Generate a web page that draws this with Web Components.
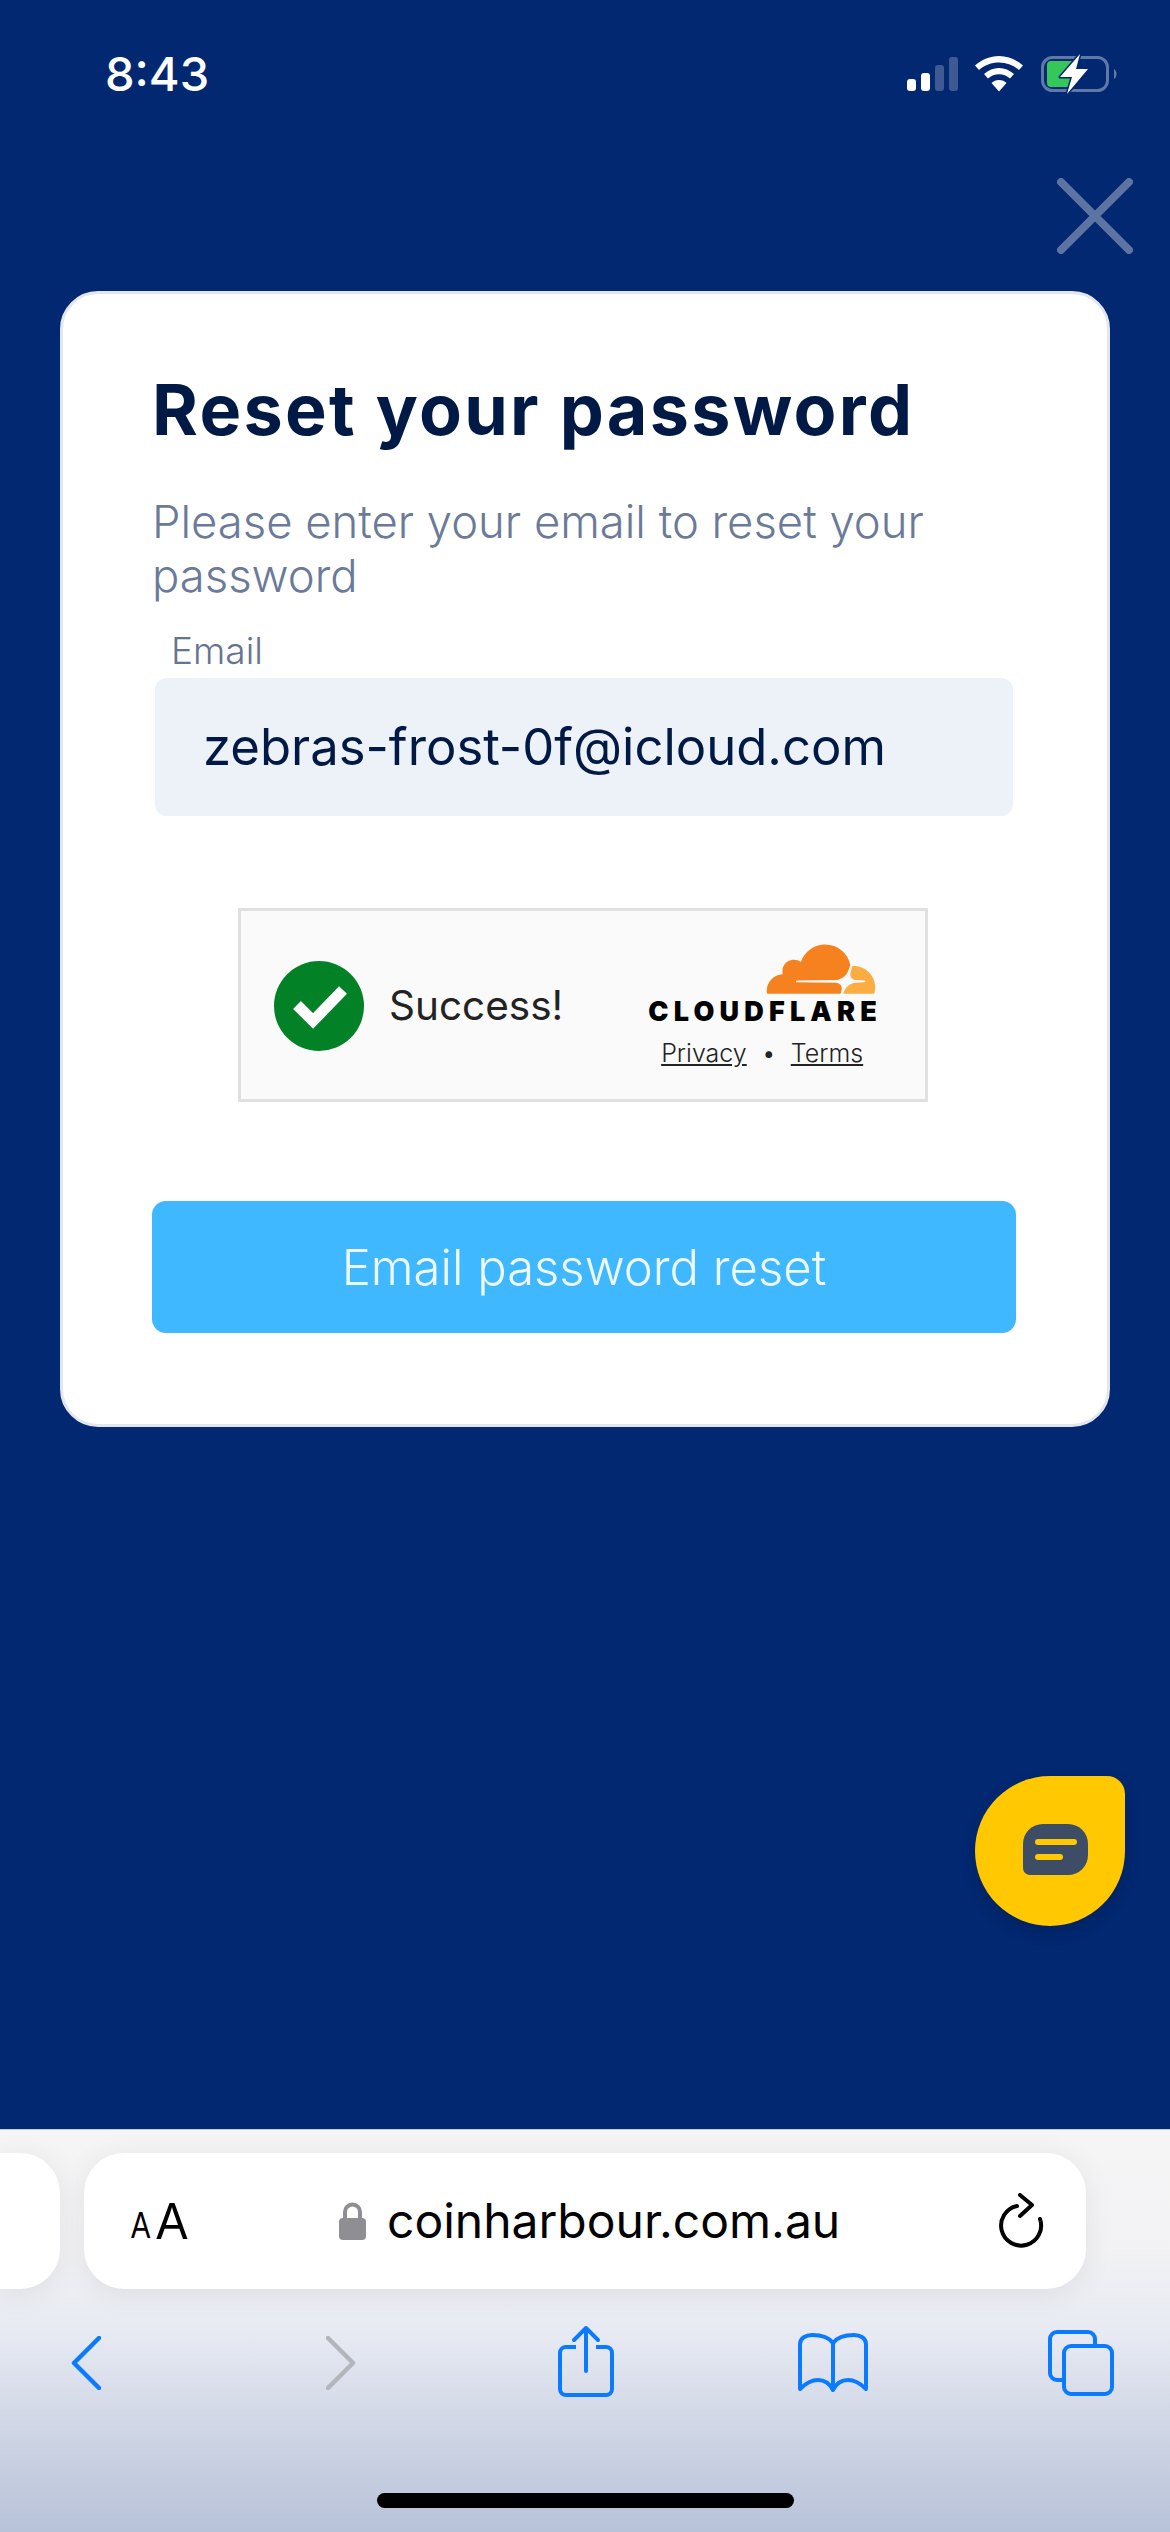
<!DOCTYPE html>
<html>
<head>
<meta charset="utf-8">
<style>
    html, body{ margin: 0; padding: 0; background: #012871; }
</style>
</head>
<body>
<app-screen>
    <status-bar time="8:43"></status-bar>
    <close-button></close-button>
    <reset-card title="Reset your password" subtitle="Please enter your email to reset your password" label="Email" value="zebras-frost-0f@icloud.com" action="Email password reset">
        <turnstile-box></turnstile-box>
    </reset-card>
    <chat-bubble></chat-bubble>
    <safari-bar url="coinharbour.com.au"></safari-bar>
</app-screen>

<script>
class AppScreen extends HTMLElement{
    constructor(){
        super();
        this.attachShadow({ mode: 'open' });
        this.shadowRoot.innerHTML = `
            <style>
                :host{
                    display: flex;
                    flex-direction: column;
                    width: 1170px;
                    height: 2532px;
                    overflow: hidden;
                    background: #012871;
                    font-family: Inter, "Liberation Sans", sans-serif;
                }
            </style>
            <slot></slot>
        `;
    }
}

class StatusBar extends HTMLElement{
    constructor(){
        super();
        this.attachShadow({ mode: 'open' });
    }
    connectedCallback(){
        this.shadowRoot.innerHTML = `
            <style>
                :host{
                    display: flex;
                    height: 130px;
                    box-sizing: border-box;
                    padding: 50px 53px 0 105px;
                    justify-content: space-between;
                    align-items: flex-start;
                }
                .time{
                    color: #fff;
                    font-size: 47px;
                    font-weight: 500;
                    line-height: 48px;
                }
                .icons{ display: flex; align-items: flex-start; gap: 0; }
                svg{ display: block; }
            </style>
            <div class="time">${this.getAttribute("time")}</div>
            <div class="icons">
                <svg width="52" height="36" viewBox="0 0 52 36" style="margin-top:6px">
                    <rect x="0" y="23" width="9" height="12" rx="3" fill="#fff"/>
                    <rect x="14" y="17" width="9" height="18" rx="3" fill="#fff"/>
                    <rect x="28" y="9" width="9" height="26" rx="3" fill="#3f5a93"/>
                    <rect x="42" y="1" width="9" height="34" rx="3" fill="#3f5a93"/>
                </svg>
                <svg width="50" height="38" viewBox="0 0 50 38" style="margin:5px 0 0 15px">
                    <path d="M25 1C16 1 8 4.500 1 10.500L5 15C10.500 10 17.500 7.500 25 7.500S39.500 10 45 15L49 10.500C42 4.500 34 1 25 1Z" fill="#fff"/>
                    <path d="M25 13C19.500 13 14.500 15 10 19L14 23.500C17 20.800 21 19.300 25 19.300S33 20.800 36 23.500L40 19C35.500 15 30.500 13 25 13Z" fill="#fff"/>
                    <path d="M25 25C22 25 19.500 26 17.500 28L25 36.500L32.500 28C30.500 26 28 25 25 25Z" fill="#fff"/>
                </svg>
                <svg width="76" height="40" viewBox="0 0 76 40" style="margin:4px 0 0 17px">
                    <rect x="1.500" y="3.500" width="65" height="33" rx="10" fill="none" stroke="#5f78a8" stroke-width="3"/>
                    <path d="M73 15C75 16 75.500 18 75.500 20S75 24 73 25Z" fill="#5f78a8"/>
                    <path d="M10 7H36L28 33H10A4 4 0 0 1 6 29V11A4 4 0 0 1 10 7Z" fill="#34c759"/>
                    <path d="M39 0L19 23H31L26 40L47 15H35Z" fill="#fff" stroke="#012871" stroke-width="3" paint-order="stroke" stroke-linejoin="round"/>
                </svg>
            </div>
        `;
    }
}

class CloseButton extends HTMLElement{
    constructor(){
        super();
        this.attachShadow({ mode: 'open' });
        this.shadowRoot.innerHTML = `
            <style>
                :host{
                    display: flex;
                    justify-content: flex-end;
                    height: 161px;
                    box-sizing: border-box;
                    padding: 48px 37px 0 0;
                }
                svg{ display: block; }
            </style>
            <svg width="76" height="76" viewBox="0 0 76 76">
                <path d="M4 4L72 72M72 4L4 72" stroke="#5d74a3" stroke-width="8" stroke-linecap="round" fill="none"/>
            </svg>
        `;
    }
}

class ResetCard extends HTMLElement{
    constructor(){
        super();
        this.attachShadow({ mode: 'open' });
    }
    connectedCallback(){
        this.shadowRoot.innerHTML = `
            <style>
                :host{
                    display: block;
                    box-sizing: border-box;
                    width: 1050px;
                    height: 1136px;
                    margin-left: 60px;
                    padding: 0 89px;
                    background: #fff;
                    border: 3px solid #e3e6ec;
                    border-radius: 38px;
                }
                h1{
                    margin: 76px 0 0;
                    color: #011a45;
                    font-size: 70px;
                    line-height: 80px;
                    font-weight: 700;
                    letter-spacing: 2.300px;
                }
                p{
                    margin: 45px 0 0;
                    color: #6b7a99;
                    font-size: 45.400px;
                    line-height: 54px;
                    font-weight: 300;
                    width: 800px;
                }
                label{
                    display: block;
                    margin: 26px 0 0 19px;
                    color: #66748f;
                    font-size: 37px;
                    line-height: 44px;
                    font-weight: 300;
                }
                .input{
                    box-sizing: border-box;
                    width: 858px;
                    height: 138px;
                    margin: 5px 0 0 3px;
                    padding-left: 48px;
                    background: #edf1f8;
                    border-radius: 12px;
                    color: #011a45;
                    font-size: 50.800px;
                    line-height: 138px;
                }
                .captcha{ display: block; margin: 92px 0 0 86px; }
                button{
                    display: block;
                    width: 864px;
                    height: 132px;
                    margin: 99px 0 0;
                    border: 0;
                    border-radius: 14px;
                    background: #40b8ff;
                    color: #eef8ff;
                    font-family: inherit;
                    font-size: 49px;
                    font-weight: 300;
                }
            </style>
            <h1>${this.getAttribute("title")}</h1>
            <p>${this.getAttribute("subtitle")}</p>
            <label>${this.getAttribute("label")}</label>
            <div class="input">${this.getAttribute("value")}</div>
            <div class="captcha"><slot></slot></div>
            <button>${this.getAttribute("action")}</button>
        `;
    }
}

class TurnstileBox extends HTMLElement{
    constructor(){
        super();
        this.attachShadow({ mode: 'open' });
        this.shadowRoot.innerHTML = `
            <style>
                :host{
                    display: flex;
                    box-sizing: border-box;
                    width: 690px;
                    height: 194px;
                    padding: 50px 49px 0 33px;
                    background: #fafafa;
                    border: 3px solid #e0e0e0;
                    justify-content: space-between;
                    align-items: flex-start;
                }
                .left{ display: flex; align-items: center; gap: 25px; }
                .left span{ color: #232323; font-size: 40.500px; line-height: 90px; }
                svg{ display: block; }
                .brand{ display: flex; flex-direction: column; align-items: flex-end; margin-top: -19px; }
                .word{
                    color: #000;
                    font-size: 27px;
                    line-height: 30px;
                    font-weight: 900;
                    letter-spacing: 5.200px;
                    margin: 3px -6px 0 0;
                }
                .links{
                    align-self: center;
                    display: flex;
                    gap: 15px;
                    margin-top: 11px;
                    color: #232323;
                    font-size: 25px;
                    line-height: 30px;
                    font-weight: 300;
                }
                .links a{ color: inherit; text-decoration: underline; }
            </style>
            <div class="left">
                <svg width="90" height="90" viewBox="0 0 90 90">
                    <circle cx="45" cy="45" r="45" fill="#038127"/>
                    <path d="M23 44L39 60L69 29" fill="none" stroke="#fff" stroke-width="11"/>
                </svg>
                <span>Success!</span>
            </div>
            <div class="brand">
                <svg width="110" height="52" viewBox="0 6 24 11.500">
                    <path fill="#f6821f" d="M16.5088 16.8447c.1475-.5068.0908-.9707-.1553-1.3154-.2246-.3164-.6045-.499-1.0615-.5205l-8.6592-.1123a.1559.1559 0 0 1-.1333-.0713c-.0283-.042-.0351-.0986-.021-.1553.0278-.084.1123-.1484.2036-.1562l8.7359-.1123c1.0351-.0489 2.1601-.8868 2.5537-1.9136l.499-1.3013c.0215-.0561.0293-.1128.0147-.168-.5625-2.5463-2.835-4.4453-5.5499-4.4453-2.5039 0-4.6284 1.6177-5.3876 3.8614-.4927-.3658-1.1187-.5625-1.794-.499-1.2026.119-2.1665 1.083-2.2861 2.2856-.0283.31-.0069.6128.0635.894C1.5683 13.171 0 14.7754 0 16.752c0 .1748.0142.3515.0352.5273.0141.083.0844.1475.1689.1475h15.9814c.0909 0 .1758-.0645.2032-.1553l.12-.4268z"/>
                    <path fill="#fbad41" d="M19.2656 11.2813c-.0771 0-.1611 0-.2383.0112-.0566 0-.1054.0415-.127.0976l-.3378 1.1744c-.1475.5068-.0918.9707.1543 1.3164.2256.3164.6055.498 1.0625.5195l1.8437.1133c.0557 0 .1055.0263.1329.0703.0283.043.0351.1074.0214.1562-.0283.084-.1132.1485-.204.1553l-1.921.1123c-1.041.0488-2.1582.8867-2.5527 1.914l-.1406.3585c-.0283.0713.0215.1416.0986.1416h6.5977c.0771 0 .1474-.0489.169-.126.1122-.4082.1757-.837.1757-1.2803 0-2.6025-2.125-4.727-4.7344-4.727"/>
                </svg>
                <div class="word">CLOUDFLARE</div>
                <div class="links"><a>Privacy</a><span>•</span><a>Terms</a></div>
            </div>
        `;
    }
}

class ChatBubble extends HTMLElement{
    constructor(){
        super();
        this.attachShadow({ mode: 'open' });
        this.shadowRoot.innerHTML = `
            <style>
                :host{
                    display: flex;
                    align-self: flex-end;
                    box-sizing: border-box;
                    width: 150px;
                    height: 150px;
                    margin: 349px 45px 0 0;
                    background: #ffc800;
                    border-radius: 75px 18px 75px 75px;
                    box-shadow: 0 6px 16px rgba(0, 0, 0, 0.16);
                    align-items: center;
                    justify-content: center;
                }
                svg{ display: block; margin: 0 0 3px 11px; }
            </style>
            <svg width="65" height="51" viewBox="0 0 65 51">
                <path d="M20 0H45A20 20 0 0 1 65 20V31A20 20 0 0 1 45 51H7A7 7 0 0 1 0 44V20A20 20 0 0 1 20 0Z" fill="#3e4d66"/>
                <rect x="12" y="15" width="42" height="6" rx="3" fill="#ffc800"/>
                <rect x="12" y="30" width="28" height="6" rx="3" fill="#ffc800"/>
            </svg>
        `;
    }
}

class SafariBar extends HTMLElement{
    constructor(){
        super();
        this.attachShadow({ mode: 'open' });
    }
    connectedCallback(){
        this.shadowRoot.innerHTML = `
            <style>
                :host{
                    display: block;
                    box-sizing: border-box;
                    height: 403px;
                    margin-top: auto;
                    padding-top: 23px;
                    background: linear-gradient(#f5f5f6 0%, #f2f2f4 30%, #e6e9f2 52%, #d3d9e7 70%, #b8c2d9 100%);
                    border-top: 1px solid #c4cbdc;
                }
                .tabs{ display: flex; gap: 24px; height: 136px; }
                .prev{
                    width: 60px;
                    background: #fff;
                    border-radius: 0 40px 40px 0;
                    box-shadow: 0 4px 30px rgba(0, 0, 0, 0.07);
                }
                .url{
                    display: flex;
                    align-items: center;
                    box-sizing: border-box;
                    width: 1002px;
                    padding: 0 41px 0 47px;
                    background: #fff;
                    border-radius: 40px;
                    box-shadow: 0 4px 30px rgba(0, 0, 0, 0.07);
                }
                .aa{ display: flex; align-items: baseline; width: 60px; gap: 6px; color: #000; font-family: "Liberation Sans", sans-serif; position: relative; top: 1px; }
                .aa b{ display: block; font-weight: 400; font-size: 29px; transform: scaleY(1.28); transform-origin: 0 85%; }
                .aa i{ display: block; font-style: normal; font-size: 47px; transform: scaleY(1.1); transform-origin: 0 85%; }
                .lock{ margin-left: 148px; }
                .site{ margin-left: 21px; color: #000; font-size: 48px; line-height: 60px; flex: 1; }
                svg{ display: block; }
                .nav{ display: flex; align-items: flex-start; height: 100px; margin-top: 36px; }
                .home{ width: 417px; height: 15px; margin: 68px auto 0; border-radius: 8px; background: #000; }
            </style>
            <div class="tabs">
                <div class="prev"></div>
                <div class="url">
                    <div class="aa"><b>A</b><i>A</i></div>
                    <svg class="lock" width="27" height="38" viewBox="0 0 27 38">
                        <path d="M6 18V10A7.500 7.500 0 0 1 21 10V18" fill="none" stroke="#8e8e93" stroke-width="4"/>
                        <rect x="0" y="16" width="27" height="22" rx="4" fill="#8e8e93"/>
                    </svg>
                    <div class="site">${this.getAttribute("url")}</div>
                    <svg width="46" height="56" viewBox="0 0 46 56">
                        <path d="M18 13A20 20 0 1 0 41 26" fill="none" stroke="#000" stroke-width="4" stroke-linecap="round"/>
                        <path d="M21 2L33 12L21 23" fill="none" stroke="#000" stroke-width="4" stroke-linecap="round" stroke-linejoin="round"/>
                    </svg>
                </div>
            </div>
            <div class="nav">
                <svg style="margin:11px 0 0 71px" width="30" height="54" viewBox="0 0 30 54">
                    <path d="M28 2L3 27L28 52" fill="none" stroke="#0a7aff" stroke-width="4.500" stroke-linecap="round" stroke-linejoin="round"/>
                </svg>
                <svg style="margin:11px 0 0 225px" width="30" height="54" viewBox="0 0 30 54">
                    <path d="M2 2L27 27L2 52" fill="none" stroke="#b3b5bc" stroke-width="4.500" stroke-linecap="round" stroke-linejoin="round"/>
                </svg>
                <svg style="margin:0 0 0 202px" width="56" height="72" viewBox="0 0 56 72">
                    <path d="M18 22H8A6 6 0 0 0 2 28V64A6 6 0 0 0 8 70H48A6 6 0 0 0 54 64V28A6 6 0 0 0 48 22H38" fill="none" stroke="#0a7aff" stroke-width="4"/>
                    <path d="M28 46V3M16 15L28 3L40 15" fill="none" stroke="#0a7aff" stroke-width="4" stroke-linecap="round" stroke-linejoin="round"/>
                </svg>
                <svg style="margin:8px 0 0 184px" width="70" height="60" viewBox="0 0 70 60">
                    <path d="M35 10C30 3 22 2 14 2C8 2 2 5 2 11V56C8 50 14 47 20 47C27 47 32 51 35 57C38 51 43 47 50 47C56 47 62 50 68 56V11C68 5 62 2 56 2C48 2 40 3 35 10ZM35 10V57" fill="none" stroke="#0a7aff" stroke-width="4" stroke-linejoin="round"/>
                </svg>
                <svg style="margin:5px 0 0 180px" width="66" height="66" viewBox="0 0 66 66">
                    <path d="M14 50H9A7 7 0 0 1 2 43V9A7 7 0 0 1 9 2H40A7 7 0 0 1 47 9V14" fill="none" stroke="#0a7aff" stroke-width="4"/>
                    <rect x="16" y="16" width="48" height="48" rx="7" fill="none" stroke="#0a7aff" stroke-width="4"/>
                </svg>
            </div>
            <div class="home"></div>
        `;
    }
}

customElements.define('app-screen', AppScreen);
customElements.define('status-bar', StatusBar);
customElements.define('close-button', CloseButton);
customElements.define('reset-card', ResetCard);
customElements.define('turnstile-box', TurnstileBox);
customElements.define('chat-bubble', ChatBubble);
customElements.define('safari-bar', SafariBar);
</script>
</body>
</html>
